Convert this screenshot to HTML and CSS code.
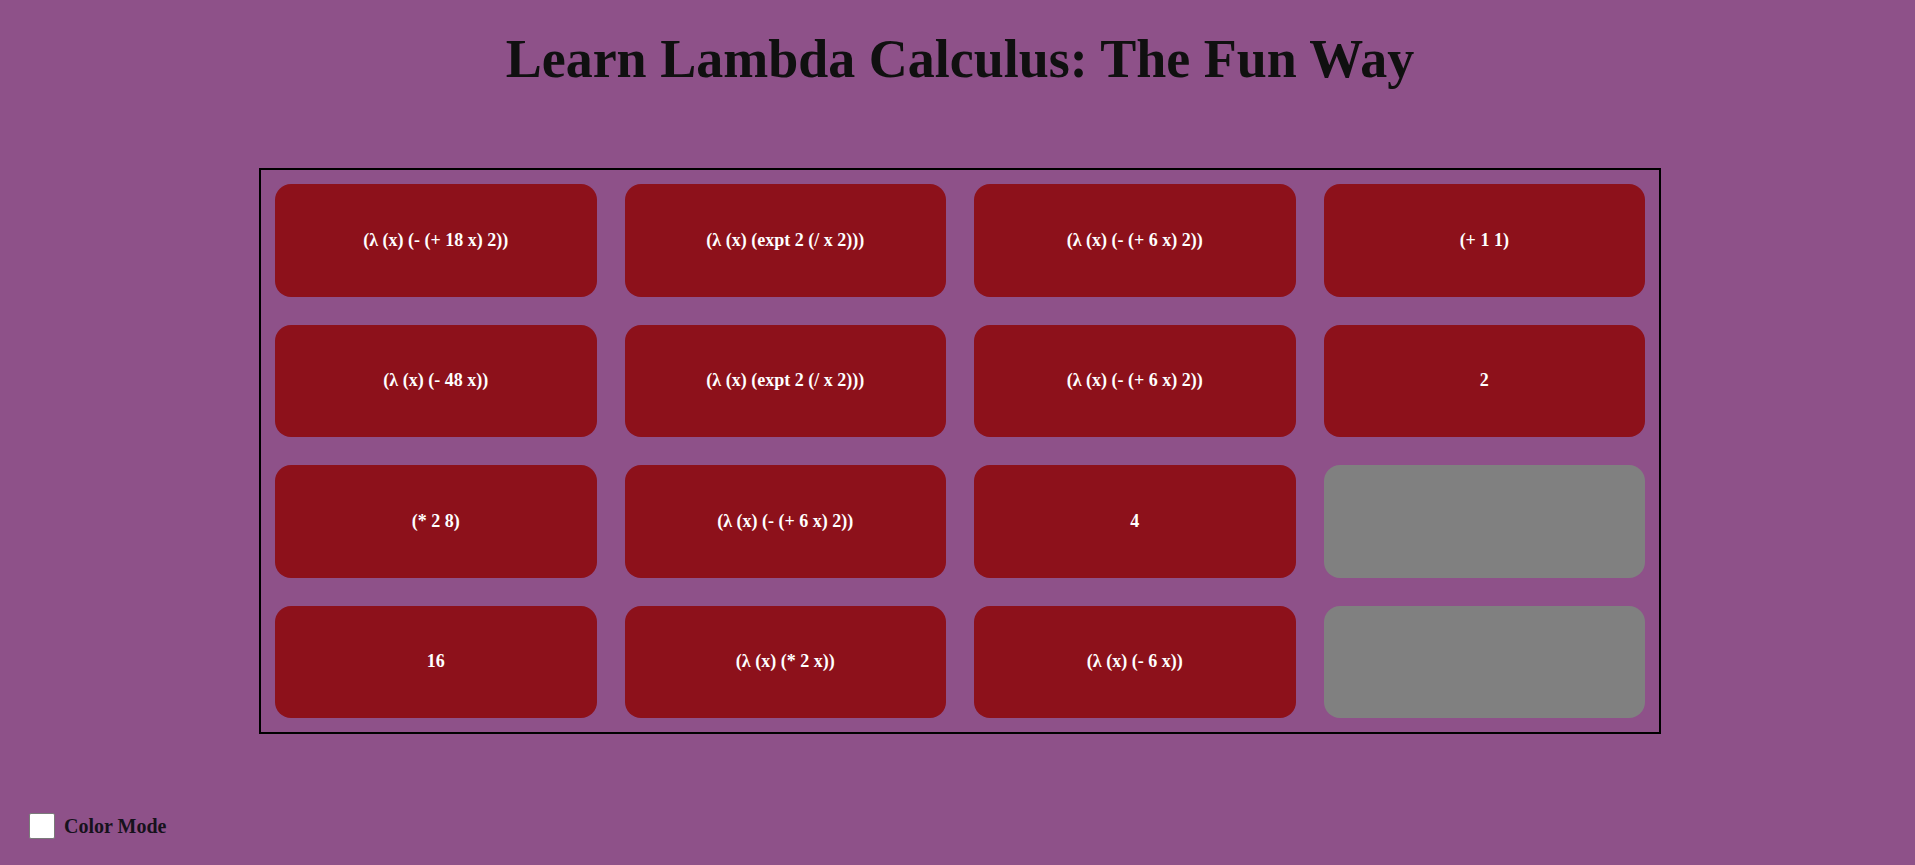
FILE: index.html
```html
<!DOCTYPE html>
<html lang="en">
<head>
<meta charset="utf-8">
<title>Learn Lambda Calculus: The Fun Way</title>
<link rel="stylesheet" href="styles.css">
</head>
<body>
<div class="page">
  <h1 class="title">Learn Lambda Calculus: The Fun Way</h1>
  <div class="board">
    <div class="card">(λ (x) (- (+ 18 x) 2))</div>
    <div class="card">(λ (x) (expt 2 (/ x 2)))</div>
    <div class="card">(λ (x) (- (+ 6 x) 2))</div>
    <div class="card">(+ 1 1)</div>
    <div class="card">(λ (x) (- 48 x))</div>
    <div class="card">(λ (x) (expt 2 (/ x 2)))</div>
    <div class="card">(λ (x) (- (+ 6 x) 2))</div>
    <div class="card">2</div>
    <div class="card">(* 2 8)</div>
    <div class="card">(λ (x) (- (+ 6 x) 2))</div>
    <div class="card">4</div>
    <div class="card card-empty"></div>
    <div class="card">16</div>
    <div class="card">(λ (x) (* 2 x))</div>
    <div class="card">(λ (x) (- 6 x))</div>
    <div class="card card-empty"></div>
  </div>
  <label class="mode">
    <input type="checkbox" class="mode-box">
    <span class="mode-label">Color Mode</span>
  </label>
</div>
</body>
</html>
```
FILE: styles.css
```css
html, body {
  margin: 0;
  padding: 0;
}
body {
  background: #8e5189;
  font-family: "Liberation Serif", "Times New Roman", serif;
  color: #111;
  min-height: 865px;
}
.page {
  padding: 28px 0 0 5px;
  display: flex;
  flex-direction: column;
  align-items: center;
}
.title {
  margin: 0;
  font-size: 54px;
  font-weight: bold;
  line-height: 62px;
  color: #101010;
  text-align: center;
}
.board {
  box-sizing: border-box;
  width: 1402px;
  margin-top: 78px;
  border: 2px solid #000;
  padding: 14px;
  display: grid;
  grid-template-columns: repeat(4, 1fr);
  grid-auto-rows: 112.5px;
  gap: 28px;
}
.card {
  background: #8d111b;
  border-radius: 16px;
  color: #fff;
  font-weight: bold;
  font-size: 18px;
  display: flex;
  align-items: center;
  justify-content: center;
  text-align: center;
}
.card-empty {
  background: #808080;
}
.mode {
  align-self: flex-start;
  margin-top: 79px;
  margin-left: 24px;
  display: flex;
  align-items: center;
  gap: 9px;
}
.mode-box {
  appearance: none;
  -webkit-appearance: none;
  margin: 0;
  width: 26px;
  height: 26px;
  box-sizing: border-box;
  background: #fff;
  border: 1px solid #7a7a7a;
  border-radius: 2px;
}
.mode-label {
  font-size: 20px;
  font-weight: bold;
  color: #16121c;
}
```
